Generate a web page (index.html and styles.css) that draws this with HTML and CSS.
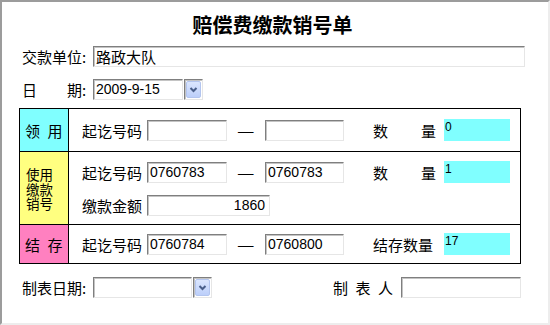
FILE: index.html
```html
<!DOCTYPE html>
<html lang="zh-CN">
<head>
<meta charset="utf-8">
<title>赔偿费缴款销号单</title>
<link rel="stylesheet" href="styles.css">
</head>
<body>
<div class="frame">
  <h1 class="title">赔偿费缴款销号单</h1>

  <div class="line line-unit">
    <span class="lbl">交款单位:</span>
    <div class="field f-unit">路政大队</div>
  </div>

  <div class="line line-date">
    <span class="lbl">日　　期:</span>
    <div class="field f-date num">2009-9-15</div>
    <div class="dd"><span class="dd-btn"><svg width="15" height="17" viewBox="0 0 15 17"><path d="M4.5 7 L7.5 10 L10.5 7" fill="none" stroke="#4a5f8a" stroke-width="2"/></svg></span></div>
  </div>

  <div class="grid">
    <div class="cat cat-cyan r1">领&ensp;用</div>
    <div class="body r1">
      <div class="rng">
        <span class="rlbl">起讫号码</span>
        <div class="field f-no num"></div>
        <span class="dash"><span class="dash-g">—</span></span>
        <div class="field f-no2 num"></div>
        <span class="qlbl"><span>数</span><span>量</span></span>
        <div class="qty num">0</div>
      </div>
    </div>

    <div class="cat cat-yellow r2"><span class="stack">使用<br>缴款<br>销号</span></div>
    <div class="body body-top r2">
      <div class="rng">
        <span class="rlbl">起讫号码</span>
        <div class="field f-no num">0760783</div>
        <span class="dash"><span class="dash-g">—</span></span>
        <div class="field f-no2 num">0760783</div>
        <span class="qlbl"><span>数</span><span>量</span></span>
        <div class="qty num">1</div>
      </div>
      <div class="rng rng-amt">
        <span class="rlbl">缴款金额</span>
        <div class="field f-amt num">1860</div>
      </div>
    </div>

    <div class="cat cat-pink">结&ensp;存</div>
    <div class="body">
      <div class="rng">
        <span class="rlbl">起讫号码</span>
        <div class="field f-no num">0760784</div>
        <span class="dash"><span class="dash-g">—</span></span>
        <div class="field f-no2 num">0760800</div>
        <span class="qlbl">结存数量</span>
        <div class="qty num">17</div>
      </div>
    </div>
  </div>

  <div class="line line-foot">
    <span class="lbl">制表日期:</span>
    <div class="field f-fdate"></div>
    <div class="dd"><span class="dd-btn"><svg width="15" height="17" viewBox="0 0 15 17"><path d="M4.5 7 L7.5 10 L10.5 7" fill="none" stroke="#4a5f8a" stroke-width="2"/></svg></span></div>
    <span class="maker">制&ensp;表&ensp;人</span>
    <div class="field f-maker"></div>
  </div>
</div>
</body>
</html>
```

FILE: styles.css
```css
html, body {
  margin: 0;
  padding: 0;
}
body {
  font-family: "Noto Sans CJK SC", sans-serif;
  font-size: 15px;
  color: #000;
  background: #fff;
}
.frame {
  width: 550px;
  height: 325px;
  box-sizing: border-box;
  border-style: solid;
  border-width: 2px;
  border-color: #9c9c9c #ededed #ededed #9c9c9c;
  background: #fff;
  overflow: hidden;
}
.title {
  margin: 13px 0 0;
  padding-right: 5px;
  font-size: 20px;
  font-weight: bold;
  line-height: 20px;
  text-align: center;
}
.line {
  display: flex;
  align-items: center;
  height: 21px;
  padding-left: 20px;
  line-height: 21px;
}
.line-unit { margin-top: 11px; }
.line-date { margin-top: 12px; }
.line-foot { margin-top: 13px; }
.lbl {
  width: 71px;
  flex: none;
  white-space: pre;
}
.field {
  box-sizing: border-box;
  height: 21px;
  flex: none;
  border: 1px solid;
  border-color: #7f7f7f #e6e6e6 #e6e6e6 #7f7f7f;
  box-shadow: inset 1px 1px 0 #c4c4c4;
  background: #fff;
  padding: 0 0 0 2px;
  line-height: 19px;
  white-space: nowrap;
  overflow: hidden;
}
.num {
  font-family: "Liberation Sans", sans-serif;
  font-size: 14px;
}
.f-unit { width: 432px; }
.f-date { width: 90px; }
.f-fdate { width: 99px; }
.f-maker { width: 120px; margin-left: 9px; }
.maker {
  margin-left: 121px;
  width: 59px;
  flex: none;
  white-space: nowrap;
}
.dd {
  box-sizing: border-box;
  width: 19px;
  height: 21px;
  margin-left: 1px;
  flex: none;
  border: 1px solid;
  border-color: #7f7f7f #e6e6e6 #e6e6e6 #7f7f7f;
  box-shadow: inset 1px 1px 0 #c4c4c4;
  padding: 1px 0 0 1px;
  display: flex;
}
.dd-btn {
  box-sizing: border-box;
  width: 15px;
  height: 17px;
  border: 1px solid #b3c5ef;
  border-radius: 2px;
  background: linear-gradient(#dbe6fe, #bccffa);
  display: block;
}
.dd-btn svg {
  display: block;
  margin: -1px 0 0 -1px;
}
.grid {
  box-sizing: border-box;
  width: 502px;
  margin: 8px 0 0 17px;
  border: 1px solid #000;
  display: grid;
  grid-template-columns: 49px 1fr;
  grid-template-rows: 43px 73px 38px;
}
.cat {
  box-sizing: border-box;
  border-right: 1px solid #000;
  padding-left: 5px;
  display: flex;
  align-items: center;
  white-space: nowrap;
}
.r1, .r2 {
  border-bottom: 1px solid #000;
}
.cat-cyan { background: #80ffff; }
.cat-yellow { background: #ffff80; padding-left: 6px; }
.cat-pink { background: #ff80c0; }
.stack {
  display: block;
  font-size: 13.5px;
  line-height: 14.5px;
  margin-top: 2px;
}
.body {
  box-sizing: border-box;
  padding-left: 13px;
  display: flex;
  flex-direction: column;
  justify-content: center;
}
.body-top {
  justify-content: flex-start;
  padding-top: 10px;
}
.rng {
  display: flex;
  align-items: center;
  height: 21px;
  line-height: 21px;
}
.rng-amt { margin-top: 12px; }
.rlbl {
  width: 65px;
  flex: none;
}
.f-no { width: 80px; }
.f-no2 { width: 79px; }
.f-amt {
  width: 123px;
  text-align: right;
  padding-right: 4px;
}
.dash {
  width: 38px;
  flex: none;
  text-align: center;
  line-height: 21px;
}
.dash-g {
  display: inline-block;
  transform: scaleX(1.3);
}
.qlbl {
  box-sizing: border-box;
  width: 63px;
  margin: 0 8px 0 29px;
  flex: none;
  display: flex;
  justify-content: space-between;
}
.qty {
  box-sizing: border-box;
  width: 66px;
  height: 22px;
  flex: none;
  align-self: flex-start;
  margin-top: -1px;
  background: #80ffff;
  font-size: 12px;
  line-height: 14px;
  padding: 1px 0 0 1px;
}
```
